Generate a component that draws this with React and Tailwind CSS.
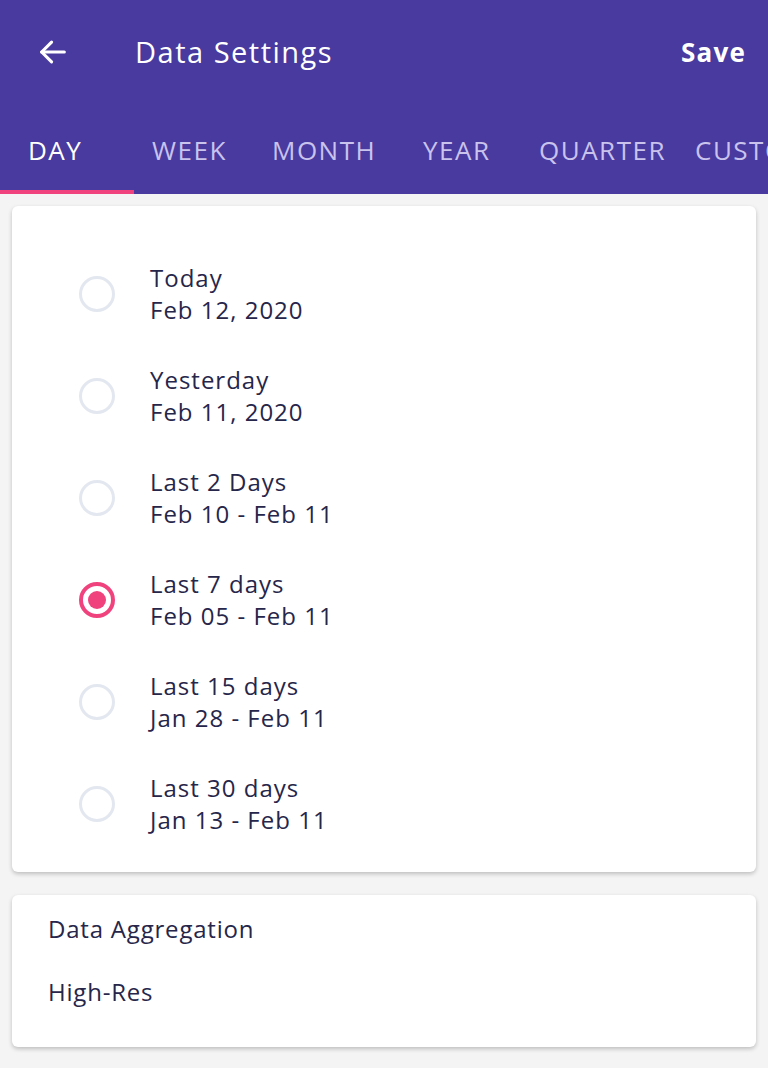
import React from "react";

const options = [
  ["Today", "Feb 12, 2020", false],
  ["Yesterday", "Feb 11, 2020", false],
  ["Last 2 Days", "Feb 10 - Feb 11", false],
  ["Last 7 days", "Feb 05 - Feb 11", true],
  ["Last 15 days", "Jan 28 - Feb 11", false],
  ["Last 30 days", "Jan 13 - Feb 11", false],
];

function Radio({ checked }) {
  if (checked) {
    return (
      <div className="w-[36px] h-[36px] rounded-full border-[4px] border-[#f0437e] flex items-center justify-center shrink-0">
        <div className="w-[18px] h-[18px] rounded-full bg-[#f0437e]" />
      </div>
    );
  }
  return <div className="w-[36px] h-[36px] rounded-full border-[3px] border-[#e3e7ef] shrink-0" />;
}

export default function App() {
  const tabs = [
    ["DAY", "w-[134px] pl-[28px]"],
    ["WEEK", "w-[120px] pl-[18px]"],
    ["MONTH", "w-[151px] pl-[18px]"],
    ["YEAR", "w-[116px] pl-[18px]"],
    ["QUARTER", "w-[156px] pl-[18px]"],
    ["CUSTOM", "pl-[18px]"],
  ];
  return (
    <div className="w-[768px] h-[1068px] bg-[#f4f4f4] overflow-hidden" style={{ fontFamily: "'Open Sans', 'Noto Sans', sans-serif" }}>
      <div className="bg-[#483a9e] text-white">
        <div className="h-[104px] flex items-center">
          <div className="w-[135px] pl-[36px] flex items-center">
            <svg width="34" height="34" viewBox="0 0 24 24" fill="none" stroke="white" strokeWidth="2.2" strokeLinecap="round" strokeLinejoin="round">
              <path d="M20 12H4" />
              <path d="M11 5l-7 7 7 7" />
            </svg>
          </div>
          <div className="text-[29px] tracking-[1.5px] flex-1">Data Settings</div>
          <div className="text-[26px] font-bold tracking-[1.2px] pr-[22px]">Save</div>
        </div>
        <div className="h-[90px] flex whitespace-nowrap overflow-hidden">
          {tabs.map(([t, w], i) => (
            <div key={t} className={`${w} shrink-0 relative flex items-center pt-[2px] text-[26px] tracking-[1.5px] ${i === 0 ? "text-white" : "text-[#c9c3ee]"}`}>
              {t}
              {i === 0 && <div className="absolute left-0 right-0 bottom-0 h-[4px] bg-[#f0437e]" />}
            </div>
          ))}
        </div>
      </div>

      <div className="mx-[12px] mt-[12px] bg-white rounded-[6px] shadow-[0_2px_4px_rgba(0,0,0,0.22)] pt-[37px] pb-[17px]">
        {options.map(([a, b, c]) => (
          <div key={a} className="h-[102px] flex items-center">
            <div className="w-[138px] pl-[67px]">
              <Radio checked={c} />
            </div>
            <div className="text-[24px] leading-[32px] tracking-[1px] text-[#26264a]">
              <div>{a}</div>
              <div>{b}</div>
            </div>
          </div>
        ))}
      </div>

      <div className="mx-[12px] mt-[23px] bg-white rounded-[6px] shadow-[0_2px_4px_rgba(0,0,0,0.22)] pl-[36px] pt-[18px] h-[152px] text-[24px] tracking-[0.8px] text-[#26264a]">
        <div className="h-[32px] leading-[32px]">Data Aggregation</div>
        <div className="h-[32px] leading-[32px] mt-[31px]">High-Res</div>
      </div>
    </div>
  );
}
